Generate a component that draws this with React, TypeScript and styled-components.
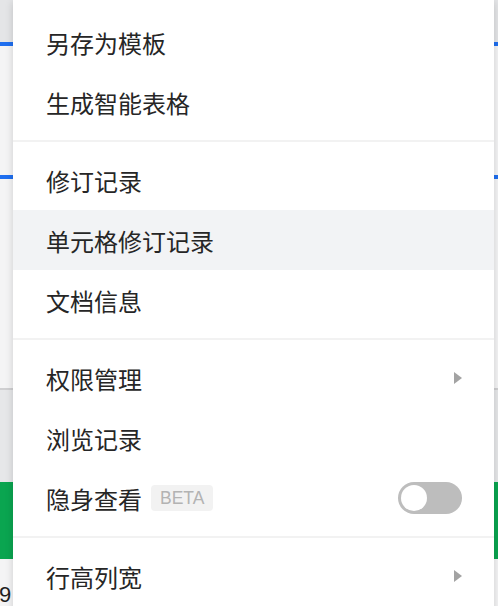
import styled, { createGlobalStyle } from "styled-components";

const GlobalStyle = createGlobalStyle`
    html, body {
        margin: 0;
        padding: 0;
        background: #ffffff;
    }
    body {
        font-family: "Noto Sans CJK SC", "Noto Sans", "Liberation Sans", sans-serif;
    }
`;

const Page = styled.div`
    position: relative;
    width: 498px;
    height: 606px;
    overflow: hidden;
`;

// the spreadsheet peeking out behind the menu
const Sheet = styled.div`
    display: flex;
    flex-direction: column;
    height: 100%;
`;

const Band = styled.div<{ $h: number; $bg: string }>`
    height: ${(props) => props.$h}px;
    flex-shrink: 0;
    background: ${(props) => props.$bg};
`;

const CellRow = styled.div`
    flex: 1;
    background: #f4f4f5;
    display: flex;
    align-items: flex-end;
    font-family: "Liberation Sans", Arial, sans-serif;
    font-size: 22px;
    color: #1f1f1f;
    line-height: 1;
    padding-bottom: 0;
    margin-left: -1px;
`;

const Menu = styled.div`
    position: absolute;
    top: 0;
    left: 13px;
    width: 481px;
    height: 620px;
    background: #ffffff;
    padding-top: 12px;
    box-shadow: 0 2px 8px rgba(0, 0, 0, 0.16);
    box-sizing: border-box;
`;

const Item = styled.div<{ $active?: boolean }>`
    height: 60px;
    display: flex;
    align-items: center;
    padding: 0 32px 0 33px;
    background: ${(props) => (props.$active ? "#f2f3f5" : "transparent")};
    color: #262626;
    font-size: 24px;
    cursor: pointer;
`;

const Label = styled.span`
    flex: 1;
    display: flex;
    align-items: center;
`;

const Divider = styled.div`
    height: 2px;
    margin: 8px 0;
    background: #f2f2f2;
`;

const Arrow = styled.span`
    width: 0;
    height: 0;
    border-top: 6px solid transparent;
    border-bottom: 6px solid transparent;
    border-left: 8px solid #a3a3a3;
`;

const Tag = styled.span`
    margin-left: 9px;
    height: 26px;
    padding: 0 9px;
    border-radius: 4px;
    background: #f2f2f2;
    color: #b3b3b3;
    font-family: "Liberation Sans", Arial, sans-serif;
    font-size: 17.5px;
    display: inline-flex;
    align-items: center;
`;

const Toggle = styled.span<{ $on?: boolean }>`
    width: 64px;
    height: 32px;
    border-radius: 16px;
    background: ${(props) => (props.$on ? "#0aa550" : "#bdbdbd")};
    display: flex;
    align-items: center;
    padding: 0 3px;
    box-sizing: border-box;
    justify-content: ${(props) => (props.$on ? "flex-end" : "flex-start")};
`;

const Knob = styled.span`
    width: 26px;
    height: 26px;
    border-radius: 50%;
    background: #ffffff;
`;

type Entry =
    | { kind: "item"; label: string; active?: boolean; sub?: boolean; beta?: boolean; toggle?: boolean }
    | { kind: "divider" };

const entries: Entry[] = [
    { kind: "item", label: "另存为模板" },
    { kind: "item", label: "生成智能表格" },
    { kind: "divider" },
    { kind: "item", label: "修订记录" },
    { kind: "item", label: "单元格修订记录", active: true },
    { kind: "item", label: "文档信息" },
    { kind: "divider" },
    { kind: "item", label: "权限管理", sub: true },
    { kind: "item", label: "浏览记录" },
    { kind: "item", label: "隐身查看", beta: true, toggle: true },
    { kind: "divider" },
    { kind: "item", label: "行高列宽", sub: true },
];

function App() {
    return (
        <Page>
            <GlobalStyle />
            <Sheet>
                <Band $h={42} $bg="#e4e5e7" />
                <Band $h={4} $bg="#1f6ff0" />
                <Band $h={129} $bg="#f4f4f5" />
                <Band $h={4} $bg="#1f6ff0" />
                <Band $h={209} $bg="#f4f4f5" />
                <Band $h={2} $bg="#cfcfd1" />
                <Band $h={92} $bg="#e6e7e9" />
                <Band $h={77} $bg="#0aa550" />
                <CellRow>9</CellRow>
            </Sheet>
            <Menu>
                {entries.map((entry, i) =>
                    entry.kind === "divider" ? (
                        <Divider key={i} />
                    ) : (
                        <Item key={i} $active={entry.active}>
                            <Label>
                                {entry.label}
                                {entry.beta && <Tag>BETA</Tag>}
                            </Label>
                            {entry.sub && <Arrow />}
                            {entry.toggle && (
                                <Toggle>
                                    <Knob />
                                </Toggle>
                            )}
                        </Item>
                    )
                )}
            </Menu>
        </Page>
    );
}

export default App;
